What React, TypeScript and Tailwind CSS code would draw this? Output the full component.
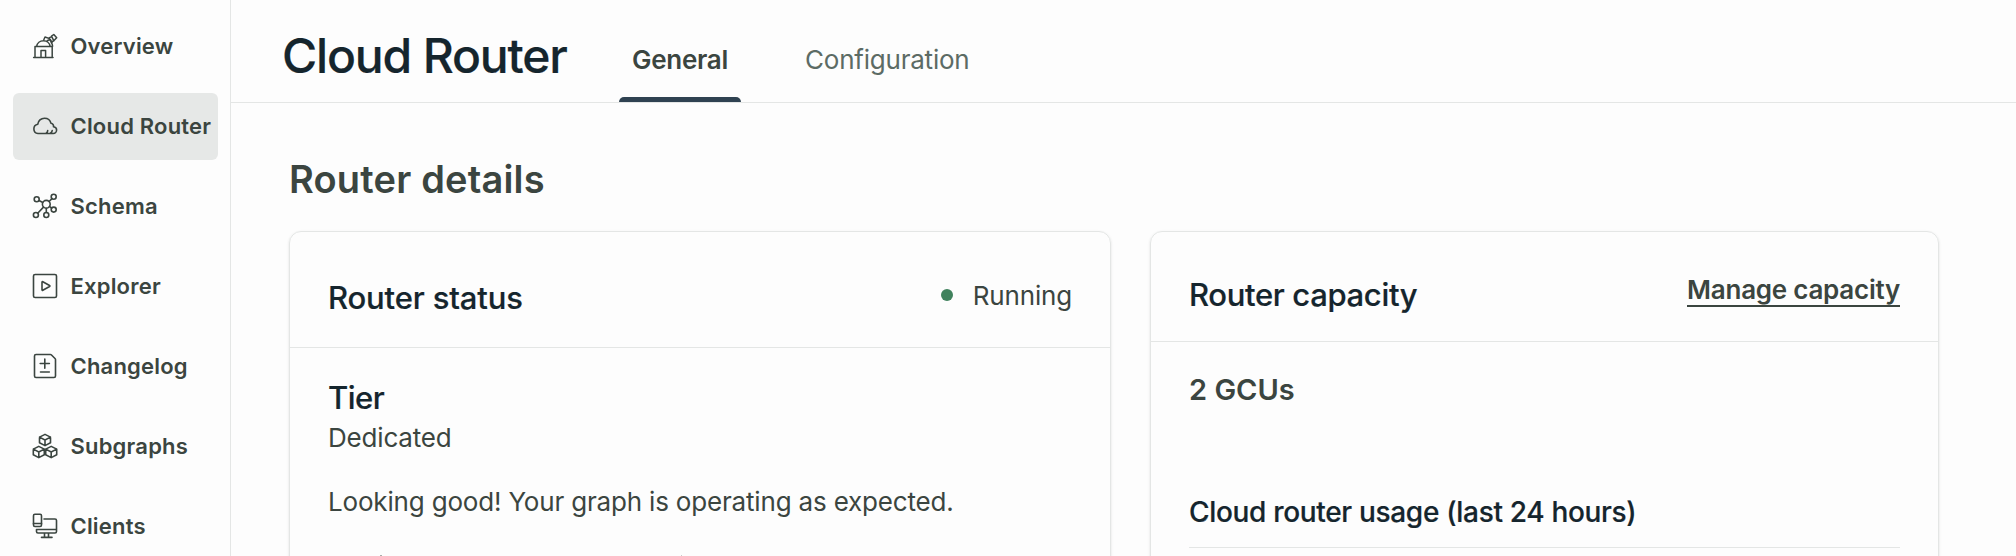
import React from "react";

const iconProps = {
  width: 26,
  height: 26,
  viewBox: "0 0 26 26",
  fill: "none",
  stroke: "currentColor",
  strokeWidth: 1.6,
  strokeLinejoin: "round" as const,
  strokeLinecap: "round" as const,
  className: "shrink-0 -mt-px",
};

const Observatory = () => (
  <svg {...iconProps} strokeWidth={1.5}>
    <path d="M1.600 24.500H21M3 24.300V13.600H20.200V24.300M9 24.300v-6.800h4.600v6.800M4.600 13.400a6.900 6.900 0 0 1 13.600 0M11.800 6.700l1.200-2.700 4.600 1.600M20.600 13.200c0-1.500-.500-2.700-1.400-3.700M15.200 7.700l3-1.400 1.900 3.200M17 4.900l2.700-1.300 2.200 4.200-2.700 1.300zM19.500 3.200l2.300-1.700 2.900 3.300-2.700 2.700" />
  </svg>
);
const Cloud = () => (
  <svg {...iconProps}>
    <path d="M21.300 20.500H6a4.700 4.700 0 0 1-.2-9.300A6.700 6.700 0 0 1 12.400 5.200c3.300 0 5.900 2.100 6.500 5 1.900.3 2.900 1.800 2.600 3.500 1.800.2 3.100 1.600 3.100 3.400 0 1.900-1.500 3.400-3.300 3.400zM14 20.300c1-.4 1.600-1.300 1.700-2.700M18.200 20.300c1.100-.4 1.800-1.300 2-2.700" />
  </svg>
);
const Schema = () => (
  <svg {...iconProps}>
    <circle cx="14.300" cy="11.300" r="3.900" />
    <circle cx="4.700" cy="6.300" r="2.500" />
    <circle cx="21.700" cy="3.800" r="2.500" />
    <circle cx="21.700" cy="16.600" r="2.500" />
    <circle cx="14.300" cy="22" r="2.500" />
    <circle cx="3.900" cy="22" r="2.500" />
    <path d="M7 7.500l3.800 2M17.100 8.500l2.900-2.900M17.500 13.400l2.100 1.700M14.300 15.300v4.100M11.500 14.100L5.700 20.200" />
  </svg>
);
const Play = () => (
  <svg {...iconProps}>
    <rect x="1.500" y="1.500" width="23" height="23" rx="1.600" />
    <path d="M10 9.200v7.600c0 .5.400.7.800.5l6.800-3.800c.4-.2.400-.8 0-1l-6.800-3.800c-.4-.2-.8 0-.8.500z" />
  </svg>
);
const Changelog = () => (
  <svg {...iconProps}>
    <path d="M4 1.500H18.400c.4 0 .8.200 1.100.5l3.500 3.500c.3.300.5.700.5 1.100V23a1.500 1.500 0 0 1-1.500 1.500H4A1.500 1.500 0 0 1 2.500 23V3A1.500 1.500 0 0 1 4 1.500zM8.200 10.500h9.200M12.800 6v9.200M8.500 19h8.800" />
  </svg>
);
const Cubes = () => (
  <svg {...iconProps}>
    {["translate(13 7)", "translate(6.800 19)", "translate(19.200 19)"].map((t) => (
      <path key={t} transform={t} d="M0-5.600l5.500 2.700v5.700L0 5.600l-5.500-2.800v-5.700zM-5.500-2.900L0 0l5.500-2.900M0 0v5.600" />
    ))}
  </svg>
);
const Devices = () => (
  <svg {...iconProps}>
    <rect x="1.500" y="1.300" width="8" height="12.200" rx="1.400" />
    <path d="M1.500 10.500h8M12 6H23a1.500 1.500 0 0 1 1.500 1.500V18.500a1.500 1.500 0 0 1-1.500 1.500H6a1.500 1.500 0 0 1-1.500-1.500V16.500H24.500M12.500 20v4M16.500 20v4M9.500 24.400h10.500" />
  </svg>
);

const items = [
  { label: "Overview", Icon: Observatory },
  { label: "Cloud Router", Icon: Cloud, active: true },
  { label: "Schema", Icon: Schema },
  { label: "Explorer", Icon: Play },
  { label: "Changelog", Icon: Changelog },
  { label: "Subgraphs", Icon: Cubes },
  { label: "Clients", Icon: Devices },
];

export default function App() {
  return (
    <div className="flex h-[556px] w-[2016px] overflow-hidden bg-[#fdfdfd] font-['Inter',sans-serif] text-[#3b4540]">
      <nav className="flex w-[231px] shrink-0 flex-col gap-[13px] border-r border-[#e4e6e5] pt-[13px] pl-[13px]">
        {items.map(({ label, Icon, active }) => (
          <a
            key={label}
            className={`flex h-[67px] w-[205px] shrink-0 items-center gap-3 rounded-md pl-[19px] text-[22px] leading-8 font-semibold tracking-[0.2px] whitespace-nowrap ${active ? "bg-[#e6e8e7]" : ""}`}
          >
            <Icon />
            <span className="-mt-px pl-[0.5px]">{label}</span>
          </a>
        ))}
      </nav>
      <main className="flex min-w-0 flex-1 flex-col">
        <header className="flex h-[103px] shrink-0 border-b border-[#e4e6e5] pl-[51px]">
          <h1 className="w-[337px] pt-[27px] text-[48px] leading-[58px] font-medium tracking-[-1.15px] text-[#15252d] [-webkit-text-stroke:0.2px]">Cloud Router</h1>
          <div className="flex h-full w-[122px] flex-col items-center justify-between pt-[44px] text-[26px] leading-8 font-semibold tracking-[-0.28px]">
            General
            <div className="h-[5px] w-full rounded-t-md bg-[#2f4251]" />
          </div>
          <div className="pt-[44px] pl-[64px] text-[26px] leading-8 tracking-[-0.22px] text-[#5c6b65]">Configuration</div>
        </header>
        <h2 className="mt-[52px] pl-[58px] text-[38px] leading-[48px] font-semibold tracking-[0.18px]">Router details</h2>
        <div className="mt-[28px] flex flex-1 items-start gap-[39px] pl-[58px]">
          <section className="h-[400px] w-[822px] shrink-0 rounded-xl border border-[#e4e6e5] shadow-sm">
            <div className="flex h-[116px] justify-between border-b border-[#e4e6e5] px-[38px]">
              <h3 className="pt-[46px] text-[31px] leading-10 font-medium tracking-[-0.15px] text-[#15252d] [-webkit-text-stroke:0.2px]">Router status</h3>
              <div className="mt-[47px] flex h-8 items-center gap-5 text-[26px] tracking-[-0.18px]">
                <span className="size-3 rounded-full bg-[#40825d]" />
                <span>Running</span>
              </div>
            </div>
            <div className="px-[38px] pt-[30px]">
              <h3 className="text-[31px] leading-10 font-medium tracking-[-0.5px] text-[#15252d] [-webkit-text-stroke:0.2px]">Tier</h3>
              <p className="text-[26px] leading-10 tracking-[-0.18px]">Dedicated</p>
              <p className="mt-6 text-[26px] leading-10 tracking-[-0.18px]">Looking good! Your graph is operating as expected.</p>
              <div className="mt-[33px] flex w-[354px] justify-between pl-[52px]">
                <span className="h-px w-0.5 bg-[#a9afac]" />
                <span className="h-px w-px bg-[#c9cdcb]" />
              </div>
            </div>
          </section>
          <section className="h-[400px] w-[789px] shrink-0 rounded-xl border border-[#e4e6e5] shadow-sm">
            <div className="flex h-[110px] justify-between border-b border-[#e4e6e5] px-[38px]">
              <h3 className="pt-[43px] text-[31px] leading-10 font-medium tracking-[-0.34px] text-[#15252d] [-webkit-text-stroke:0.2px]">Router capacity</h3>
              <a className="mt-[42px] h-[33px] border-b-2 border-[#3b4540] text-[26px] leading-8 font-semibold tracking-[-0.25px]">Manage capacity</a>
            </div>
            <div className="px-[38px] pt-[30px]">
              <p className="text-[29px] leading-9 font-semibold">2 GCUs</p>
              <h4 className="mt-[86px] border-b border-[#e4e6e5] pb-[17px] text-[28px] leading-9 font-medium tracking-[-0.32px] text-[#15252d] [-webkit-text-stroke:0.2px]">Cloud router usage (last 24 hours)</h4>
            </div>
          </section>
        </div>
      </main>
    </div>
  );
}
